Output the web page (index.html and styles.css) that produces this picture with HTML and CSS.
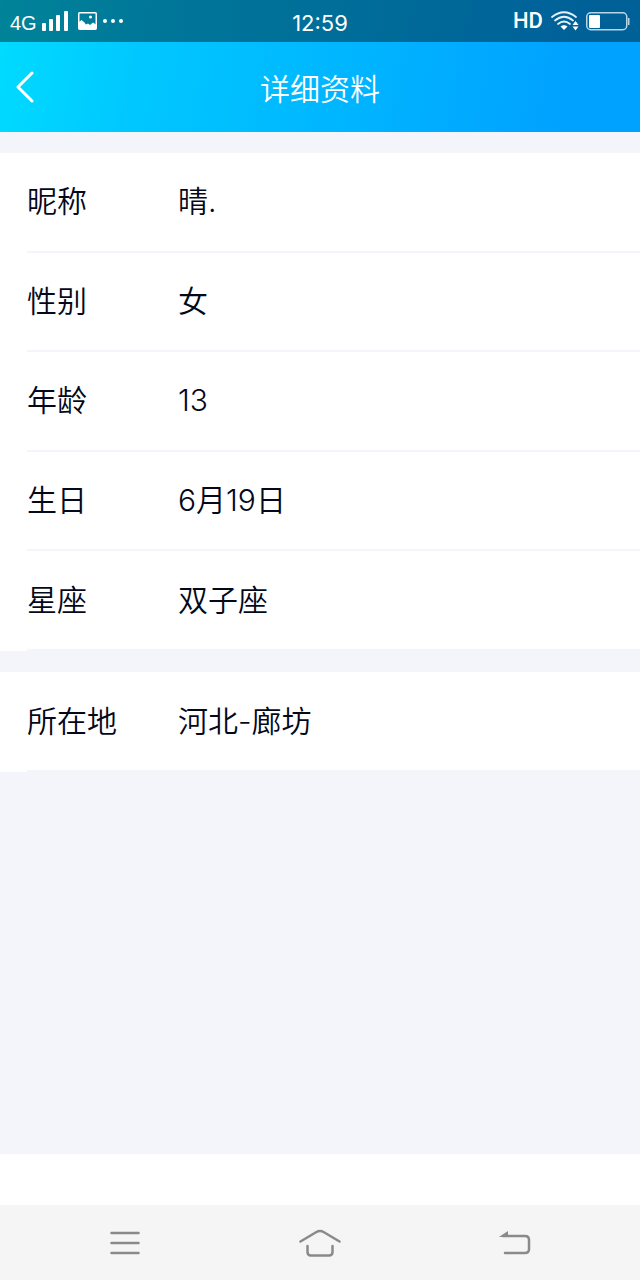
FILE: index.html
```html
<!DOCTYPE html>
<html lang="zh-CN">
<head>
    <meta charset="UTF-8">
    <meta name="viewport" content="width=device-width, initial-scale=1.0">
    <title>详细资料</title>
    <link rel="stylesheet" href="styles.css">
</head>
<body>
    <header class="top">
        <div class="status-bar">
            <div class="status-side">
                <span class="network">4G</span>
                <svg class="signal" width="26" height="20" viewBox="0 0 26 20" fill="#fff">
                    <rect x="0" y="12" width="4" height="8" rx="1"/>
                    <rect x="7" y="8" width="4" height="12" rx="1"/>
                    <rect x="14" y="4" width="4" height="16" rx="1"/>
                    <rect x="22" y="0" width="4" height="20" rx="1"/>
                </svg>
                <svg class="photo" width="19" height="18" viewBox="0 0 19 18">
                    <rect x="0.75" y="0.75" width="17.5" height="16.5" rx="1" fill="none" stroke="#fff" stroke-width="1.5"/>
                    <path d="M1 10l2.500-2 2.500 2 2 2.500 2-1 2 1.500 3-2.500 3 2v4.500H1z" fill="#fff"/>
                    <circle cx="12.5" cy="5" r="1.5" fill="#fff"/>
                </svg>
                <svg class="dots" width="20" height="4" viewBox="0 0 20 4" fill="#fff">
                    <circle cx="2" cy="2" r="2"/>
                    <circle cx="10" cy="2" r="2"/>
                    <circle cx="18" cy="2" r="2"/>
                </svg>
            </div>
            <time class="clock">12:59</time>
            <div class="status-side status-right">
                <span class="hd">HD</span>
                <svg class="wifi" width="28" height="20" viewBox="0 0 28 20" fill="none" stroke="#e6f3fa" stroke-width="1.7" stroke-linecap="round">
                    <path d="M1 6Q13 -3.500 25 6"/>
                    <path d="M4 9.500Q13 2 22 9.500"/>
                    <path d="M7 13Q13 8 19 13"/>
                    <path d="M9.500 15.500q3.500-2.500 7 0L13 19z" fill="#fff" stroke="none"/>
                    <path d="M21.500 14l3-4 3 4zM21.500 15.500l3 4 3-4z" fill="#fff" stroke="none"/>
                </svg>
                <svg class="battery" width="44" height="19" viewBox="0 0 44 19">
                    <rect x="0.75" y="0.75" width="40" height="17" rx="4" fill="none" stroke="#b8d6e6" stroke-width="1.5"/>
                    <rect x="3" y="3" width="11" height="13" rx="1" fill="#fff"/>
                    <path d="M42 6h1.500v7H42z" fill="#b8d6e6"/>
                </svg>
            </div>
        </div>
        <div class="title-bar">
            <button class="back-btn" type="button" aria-label="返回">
                <svg width="18" height="32" viewBox="0 0 18 32" fill="none" stroke="#fff" stroke-width="3" stroke-linecap="round" stroke-linejoin="round">
                    <path d="M16 2L2 16l14 14"/>
                </svg>
            </button>
            <h1 class="title">详细资料</h1>
        </div>
    </header>

    <main class="content">
        <dl class="group basic">
            <div class="row"><dt>昵称</dt><dd>晴.</dd></div>
            <div class="row"><dt>性别</dt><dd>女</dd></div>
            <div class="row"><dt>年龄</dt><dd>13</dd></div>
            <div class="row"><dt>生日</dt><dd>6月19日</dd></div>
            <div class="row"><dt>星座</dt><dd>双子座</dd></div>
        </dl>
        <dl class="group">
            <div class="row"><dt>所在地</dt><dd>河北-廊坊</dd></div>
        </dl>
    </main>

    <div class="bottom-space"></div>

    <nav class="nav-bar">
        <button class="nav-btn" type="button" aria-label="菜单">
            <svg width="30" height="24" viewBox="0 0 30 24" fill="none" stroke="#8a8a8a" stroke-width="2.5" stroke-linecap="round">
                <path d="M1.500 2h27M1.500 12h27M1.500 22h27"/>
            </svg>
        </button>
        <button class="nav-btn" type="button" aria-label="主页">
            <svg width="42" height="28" viewBox="0 0 42 28" fill="none" stroke="#8a8a8a" stroke-width="2.5" stroke-linecap="round">
                <path d="M1.500 12.500L17 3.200q4-2.400 8 0l15.500 9.300"/>
                <path d="M8.500 17v6q0 3.500 3.500 3.500h18q3.500 0 3.500-3.500v-6"/>
            </svg>
        </button>
        <button class="nav-btn" type="button" aria-label="返回上一页">
            <svg width="32" height="26" viewBox="0 0 32 26" fill="none" stroke="#8a8a8a" stroke-width="2.5" stroke-linecap="round">
                <path d="M4 6h22q4 0 4 4v9q0 4-4 4H6"/>
                <path d="M0 7l9-6v6z" fill="#8a8a8a" stroke="none"/>
            </svg>
        </button>
    </nav>
</body>
</html>
```

FILE: styles.css
```css
* {
    margin: 0;
    padding: 0;
    box-sizing: border-box;
}

body {
    min-height: 100vh;
    display: flex;
    flex-direction: column;
    font-family: Inter, "Noto Sans CJK SC", sans-serif;
    font-weight: 350;
    color: #03081a;
    background: #fff;
}

button {
    border: none;
    background: none;
    cursor: pointer;
}

svg {
    display: block;
    flex: none;
}

/* Header */
.top {
    color: #fff;
    background: linear-gradient(100deg, #00dcff 0%, #00c8ff 22%, #00a2ff 88%);
}

.status-bar {
    height: 42px;
    padding: 0 10px;
    display: grid;
    grid-template-columns: 1fr auto 1fr;
    align-items: center;
    background: rgba(0, 0, 0, 0.4);
}

.status-side {
    display: flex;
    align-items: center;
}

.status-right {
    justify-content: flex-end;
}

.network {
    font-size: 20px;
    line-height: 24px;
    font-weight: 400;
    font-family: "Liberation Sans", Arial, sans-serif;
    padding-top: 4px;
}

.signal {
    margin-left: 5px;
}

.photo {
    margin-left: 10px;
}

.dots {
    margin-left: 6px;
}

.clock {
    font-size: 22px;
    line-height: 24px;
    font-weight: 400;
    padding-top: 4px;
}

.hd {
    font-family: "Liberation Sans Narrow", Roboto, sans-serif;
    font-size: 22px;
    line-height: 24px;
    font-weight: 500;
}

.wifi {
    margin-left: 8px;
}

.battery {
    margin-left: 7px;
}

.title-bar {
    height: 90px;
    padding: 4px 16px 0;
    display: grid;
    grid-template-columns: 48px 1fr 48px;
    align-items: center;
}

.back-btn {
    height: 48px;
    padding-bottom: 4px;
    display: flex;
    align-items: center;
}

.title {
    font-size: 30px;
    line-height: 44px;
    font-weight: 350;
    text-align: center;
}

/* Profile rows */
.content {
    flex: 1;
    padding-top: 21px;
    display: flex;
    flex-direction: column;
    gap: 21px;
    background: #f4f5fa;
}

.group {
    min-height: 100px;
    display: grid;
    grid-auto-rows: 1fr;
    background: #fff;
}

.basic {
    min-height: 498px;
}

.row {
    margin-left: 27px;
    padding-bottom: 1px;
    display: flex;
    align-items: center;
    font-size: 30px;
    line-height: 44px;
    border-bottom: 2px solid #f4f5fa;
}

.row dt {
    width: 151px;
}

/* Bottom */
.bottom-space {
    height: 51px;
}

.nav-bar {
    height: 75px;
    padding: 0 27px;
    display: grid;
    grid-template-columns: repeat(3, 1fr);
    background: #f5f5f5;
}

.nav-btn {
    display: flex;
    align-items: center;
    justify-content: center;
}
```
